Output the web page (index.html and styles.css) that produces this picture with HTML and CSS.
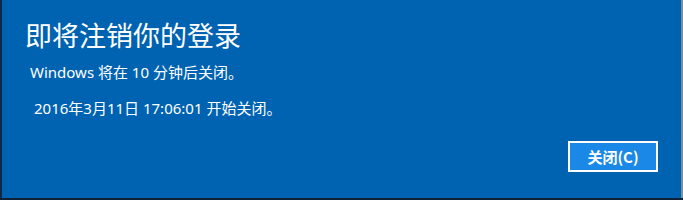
FILE: index.html
```html
<!DOCTYPE html>
<html lang="zh-CN">
<head>
<meta charset="utf-8">
<link rel="stylesheet" href="styles.css">
</head>
<body>
<div class="screen">
  <div class="edge-left"></div>
  <div class="dialog">
    <h1 class="title">即将注销你的登录</h1>
    <p class="msg msg-first">Windows 将在 10 分钟后关闭。</p>
    <p class="msg msg-second">2016年3月11日 17:06:01 开始关闭。</p>
    <div class="actions">
      <button class="btn">关闭(C)</button>
    </div>
  </div>
  <div class="edge-right"></div>
</div>
<div class="under"></div>
</body>
</html>
```
FILE: styles.css
```css
html, body {
  margin: 0;
  padding: 0;
  background: #0d2236;
  width: 683px;
  height: 200px;
  overflow: hidden;
}
.screen {
  display: flex;
  height: 198px;
}
.edge-left {
  width: 2px;
  background: #0c2a48;
}
.edge-right {
  width: 2px;
  background: #7f8c99;
}
.dialog {
  flex: 1;
  background: #0063b1;
  color: #ffffff;
  font-family: "Noto Sans", "Noto Sans CJK SC", sans-serif;
  display: flex;
  flex-direction: column;
  padding: 0 21px 0 0;
}
.title {
  margin: 17px 0 0 23px;
  font-size: 27px;
  font-weight: 400;
  line-height: 36px;
  font-family: "Noto Sans CJK SC", sans-serif;
  letter-spacing: 0;
}
.msg {
  margin: 0;
  font-size: 15px;
  line-height: 20px;
}
.msg-first {
  margin: 9px 0 0 28px;
}
.msg-second {
  margin: 16px 0 0 32px;
}
.actions {
  display: flex;
  justify-content: flex-end;
  margin-top: 23px;
  padding-right: 2px;
}
.btn {
  width: 90px;
  height: 31px;
  box-sizing: border-box;
  border: 2px solid #ffffff;
  background: #1a88e6;
  color: #ffffff;
  font-family: "Noto Sans CJK SC", "Noto Sans", sans-serif;
  font-size: 15px;
  font-weight: 700;
  padding: 0;
  line-height: 27px;
}
.under {
  height: 2px;
  background: #0d2236;
}
```
